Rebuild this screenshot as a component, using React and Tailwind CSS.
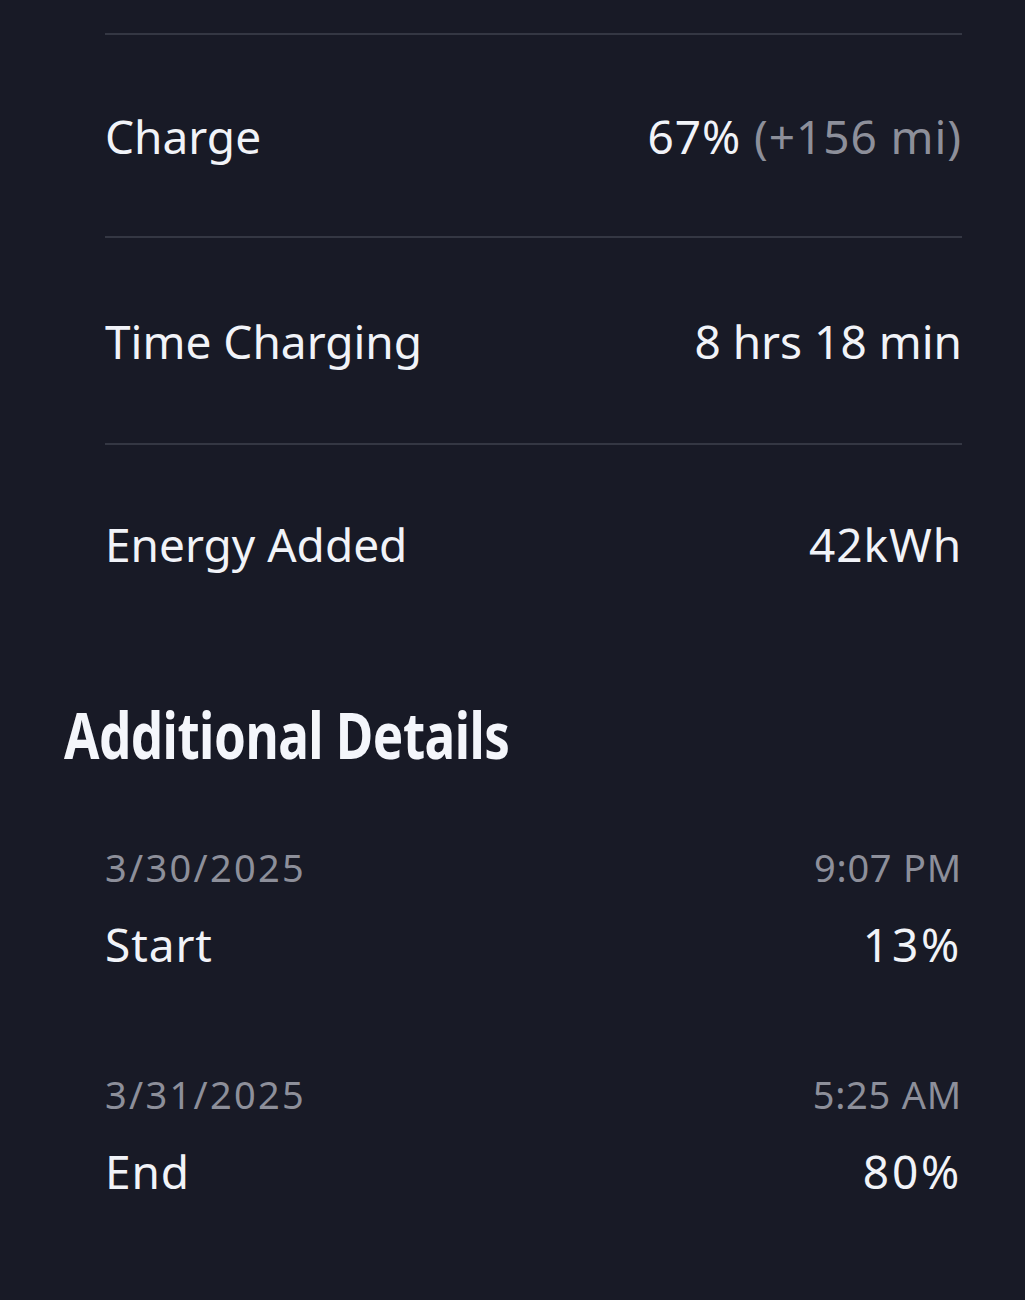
import React from 'react';

const Divider = () => <div className="h-[2px] bg-[#343743]" />;

const StatRow = ({ label, children, className, valueClass = '' }) => (
    <div className={`flex items-center justify-between ${className}`}>
        <span>{label}</span>
        <span className={valueClass}>{children}</span>
    </div>
);

const EventRow = ({ date, time, label, value, className }) => (
    <div className={`flex flex-col ${className}`}>
        <div className="flex justify-between text-[38px] leading-[44px] text-[#8d8f9a]">
            <span className="tracking-[0.06em]">{date}</span>
            <span className="tracking-[0.02em]">{time}</span>
        </div>
        <div className="flex justify-between text-[46px] leading-[56px] text-[#f1f3f8] mt-[27px]">
            <span className="tracking-[0.02em]">{label}</span>
            <span className="tracking-[0.06em]">{value}</span>
        </div>
    </div>
);

export default function App() {
    return (
        <div className="w-full min-h-[1300px] bg-[#181a26] text-[#f1f3f8] font-['Noto_Sans',sans-serif] overflow-hidden">
            <div className="ml-[105px] mr-[63px] pt-[33px] text-[46px] leading-[56px]">
                <Divider />
                <StatRow label="Charge" className="h-[201px]" valueClass="tracking-[0.02em]">
                    67% <span className="text-[#8d8f9a]">(+156 mi)</span>
                </StatRow>
                <Divider />
                <StatRow label="Time Charging" className="h-[205px]">8 hrs 18 min</StatRow>
                <Divider />
                <StatRow label="Energy Added" className="h-[198px]" valueClass="tracking-[0.02em]">42kWh</StatRow>
            </div>

            <h2 className="ml-[64px] mt-[52px] text-[64px] leading-[80px] font-bold tracking-[-0.01em] text-[#f4f6fb] origin-left scale-x-[0.8]">
                Additional Details
            </h2>

            <div className="ml-[105px] mr-[63px] mt-[70px]">
                <EventRow date="3/30/2025" time="9:07 PM" label="Start" value="13%" />
                <EventRow date="3/31/2025" time="5:25 AM" label="End" value="80%" className="mt-[100px]" />
            </div>
        </div>
    );
}
